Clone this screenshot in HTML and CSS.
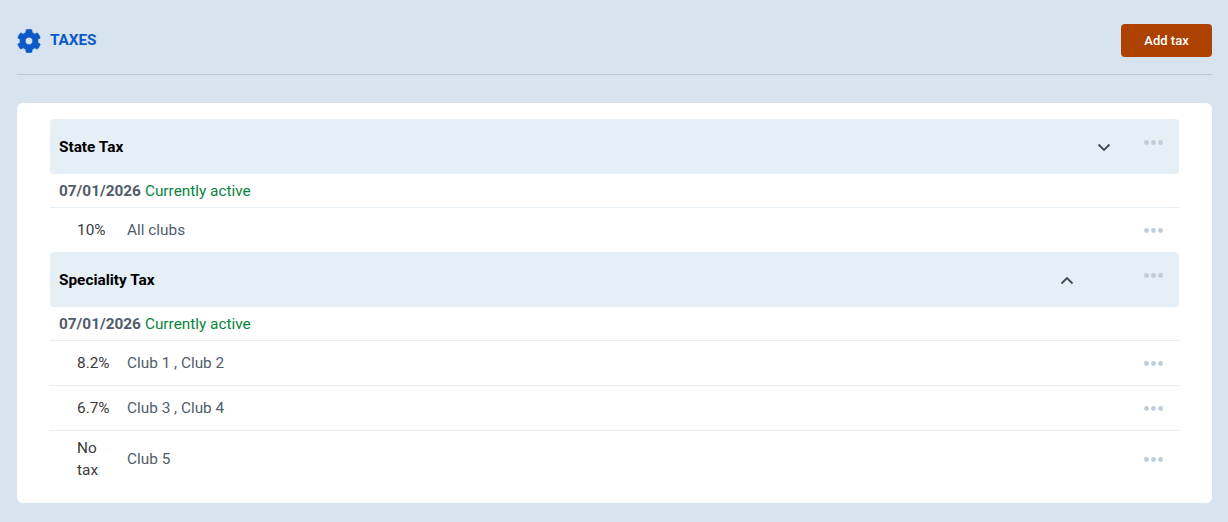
FILE: index.html
```html
<!DOCTYPE html>
<html lang="en">
<head>
<meta charset="utf-8">
<title>Taxes</title>
<link rel="stylesheet" href="styles.css">
</head>
<body>
<main class="page">
  <header class="topbar">
    <div class="title">
      <svg class="gear" viewBox="0 0 512 512"><path d="M487.4 315.7l-42.6-24.6c4.3-23.2 4.3-47 0-70.2l42.6-24.6c4.9-2.8 7.1-8.6 5.5-14-11.1-35.6-30-67.8-54.7-94.6-3.8-4.1-10-5.1-14.8-2.3L380.8 110c-17.9-15.4-38.5-27.3-60.8-35.1V25.8c0-5.6-3.9-10.5-9.4-11.7-36.7-8.2-74.3-7.8-109.2 0-5.5 1.2-9.4 6.1-9.4 11.7V75c-22.2 7.9-42.8 19.8-60.8 35.1L88.7 85.5c-4.9-2.8-11-1.9-14.8 2.3-24.7 26.7-43.6 58.9-54.7 94.6-1.7 5.4.6 11.2 5.5 14L67.3 221c-4.3 23.2-4.3 47 0 70.2l-42.6 24.6c-4.9 2.8-7.1 8.6-5.5 14 11.1 35.6 30 67.8 54.7 94.6 3.8 4.1 10 5.1 14.8 2.3l42.6-24.6c17.9 15.4 38.5 27.3 60.8 35.1v49.2c0 5.6 3.9 10.5 9.4 11.7 36.7 8.2 74.3 7.8 109.2 0 5.5-1.2 9.4-6.1 9.4-11.7v-49.2c22.2-7.9 42.8-19.8 60.8-35.1l42.6 24.6c4.9 2.8 11 1.9 14.8-2.3 24.7-26.7 43.6-58.9 54.7-94.6 1.5-5.5-.7-11.3-5.6-14.1zM256 336c-44.1 0-80-35.9-80-80s35.9-80 80-80 80 35.9 80 80-35.9 80-80 80z"/></svg>
      <h1 class="heading">TAXES</h1>
    </div>
    <button class="add-btn" type="button">Add tax</button>
  </header>

  <section class="card">
    <div class="group-head">
      <span class="group-name">State Tax</span>
      <svg class="chev chev-down" viewBox="0 0 14 9"><path d="M1.5 1.5 7 7l5.5-5.5"/></svg>
      <svg class="dots dots-head" viewBox="0 0 19 5"><circle cx="2.5" cy="2.5" r="2.4"/><circle cx="9.5" cy="2.5" r="2.4"/><circle cx="16.5" cy="2.5" r="2.4"/></svg>
    </div>
    <div class="date-row"><strong class="date">07/01/2026</strong> <span class="status">Currently active</span></div>
    <div class="row row-last">
      <span class="pct">10%</span><span class="clubs">All clubs</span>
      <svg class="dots" viewBox="0 0 19 5"><circle cx="2.5" cy="2.5" r="2.4"/><circle cx="9.5" cy="2.5" r="2.4"/><circle cx="16.5" cy="2.5" r="2.4"/></svg>
    </div>

    <div class="group-head">
      <span class="group-name">Speciality Tax</span>
      <svg class="chev chev-up" viewBox="0 0 14 9"><path d="M1.5 7.5 7 2l5.5 5.5"/></svg>
      <svg class="dots dots-head" viewBox="0 0 19 5"><circle cx="2.5" cy="2.5" r="2.4"/><circle cx="9.5" cy="2.5" r="2.4"/><circle cx="16.5" cy="2.5" r="2.4"/></svg>
    </div>
    <div class="date-row"><strong class="date">07/01/2026</strong> <span class="status">Currently active</span></div>
    <div class="row">
      <span class="pct">8.2%</span><span class="clubs">Club 1 , Club 2</span>
      <svg class="dots" viewBox="0 0 19 5"><circle cx="2.5" cy="2.5" r="2.4"/><circle cx="9.5" cy="2.5" r="2.4"/><circle cx="16.5" cy="2.5" r="2.4"/></svg>
    </div>
    <div class="row">
      <span class="pct">6.7%</span><span class="clubs">Club 3 , Club 4</span>
      <svg class="dots" viewBox="0 0 19 5"><circle cx="2.5" cy="2.5" r="2.4"/><circle cx="9.5" cy="2.5" r="2.4"/><circle cx="16.5" cy="2.5" r="2.4"/></svg>
    </div>
    <div class="row row-last row-tall">
      <span class="pct pct-wrap">No tax</span><span class="clubs">Club 5</span>
      <svg class="dots" viewBox="0 0 19 5"><circle cx="2.5" cy="2.5" r="2.4"/><circle cx="9.5" cy="2.5" r="2.4"/><circle cx="16.5" cy="2.5" r="2.4"/></svg>
    </div>
  </section>
</main>
</body>
</html>
```
FILE: styles.css
```css
* { box-sizing: border-box; }
html, body { margin: 0; height: 100%; overflow: hidden; }
body {
  background: #d7e3ef;
  font-family: Roboto, "Liberation Sans", sans-serif;
  font-size: 15.36px;
  color: #525c6b;
}
.page { padding: 24px 16px 0 17px; }
.topbar {
  display: flex;
  justify-content: space-between;
  align-items: flex-start;
  height: 51px;
  border-bottom: 1px solid #bcc8d5;
}
.title { display: flex; align-items: flex-start; gap: 10px; }
.gear { width: 24px; height: 24px; fill: #0c5ac8; stroke: #0c5ac8; stroke-width: 14; margin-top: 5px; }
.heading { margin: 6px 0 0 -1px; font-size: 15.36px; line-height: 20px; font-weight: 700; letter-spacing: -0.1px; color: #0c5ac8; }
.add-btn {
  width: 91px;
  height: 33px;
  border: 0;
  border-radius: 4px;
  background: #ad4200;
  color: #fff;
  font: 500 13px Roboto, sans-serif;
  padding: 0;
}
.card {
  margin-top: 28px;
  height: 400px;
  background: #fff;
  border-radius: 6px;
  padding: 16px 33px 0;
}
.group-head {
  display: flex;
  align-items: center;
  height: 55px;
  padding: 0 16.5px 0 9px;
  background: #e6eef6;
  border-radius: 4px;
}
.group-name { flex: 1; font-weight: 700; color: #000; font-size: 15.36px; }
.chev { width: 14px; height: 9px; fill: none; stroke: #3f4a56; stroke-width: 1.8; margin-top: 1px; }
.chev-down { margin-right: 32.5px; }
.chev-up { margin-right: 70px; }
.dots { width: 19px; height: 5px; fill: #bfccda; flex: none; }
.dots-head { margin-top: -9px; }
.date-row {
  height: 34px;
  padding: 0 9px;
  display: flex;
  align-items: center;
  gap: 4px;
  border-bottom: 1px solid #e6eef6;
}
.date { font-weight: 700; color: #525c6b; }
.status { color: #08843c; }
.row {
  display: flex;
  align-items: center;
  height: 45px;
  padding: 0 16.5px 0 27px;
  border-bottom: 1px solid #e6eef6;
}
.row-last { border-bottom: 0; height: 44px; }
.row-tall { height: 56px; }
.pct { width: 50px; color: #3b3b3b; flex: none; line-height: 22px; }
.pct-wrap { padding-right: 20px; }
.clubs { flex: 1; }
```
